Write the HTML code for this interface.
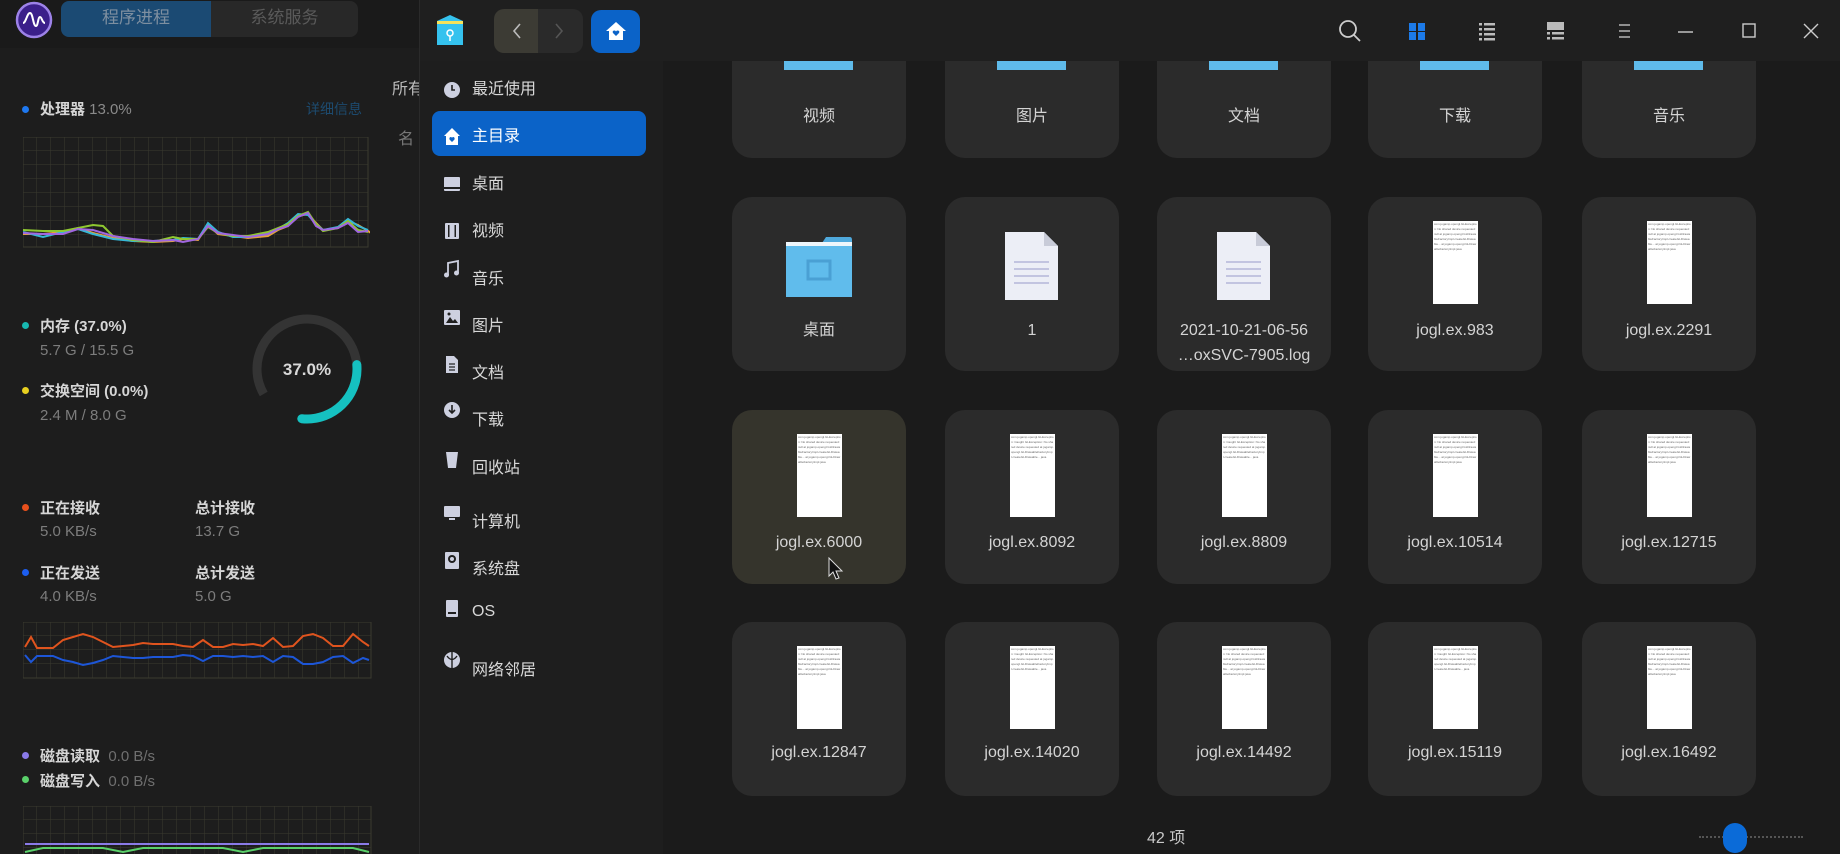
<!DOCTYPE html>
<html><head><meta charset="utf-8"><style>
*{margin:0;padding:0;box-sizing:border-box}
body{width:1840px;height:854px;overflow:hidden;background:#1c1c1c;font-family:"Liberation Sans","Noto Sans CJK SC",sans-serif;position:relative;color:#d0d0d0}
.a{position:absolute}
.lbl{font-size:15px;color:#d6d6d6;font-weight:bold}
.sub{font-size:15px;color:#7d7d7d}
.dot{width:7px;height:7px;border-radius:50%}
.side{font-size:16px;color:#d8d8d8}
.tile{position:absolute;width:174px;height:174px;border-radius:20px;background:#2b2b2b}
.tl{position:absolute;left:0;width:174px;text-align:center;font-size:16px;color:#d4d4d4;line-height:25px}
.thumb{position:absolute;left:65px;top:24px;width:45px;height:83px;background:#fff;overflow:hidden;font-size:3px;line-height:5px;color:#666;padding:1px;word-break:break-all}
.fold{position:absolute;left:52px;width:69px;height:60px}
</style></head><body>

<div class="a" style="left:0;top:0;width:420px;height:854px;background:#1d1d1d"></div>
<div class="a" style="left:0;top:0;width:420px;height:48px;background:#1a1a1a"></div>
<svg class="a" style="left:15px;top:1px" width="38" height="38"><circle cx="19" cy="19" r="17" fill="#3b1f8a" stroke="#9d82e8" stroke-width="2.5"/><path d="M8 22 C11 22 12 12 15 12 C18 12 18 25 21 25 C23 25 23 16 25 16 C27 16 27 22 30 22" stroke="#fff" stroke-width="2" fill="none"/></svg>
<div class="a" style="left:61px;top:1px;width:150px;height:36px;background:#1b4a73;border-radius:8px 0 0 8px;color:#7e8fa0;font-size:17px;text-align:center;line-height:34px">程序进程</div>
<div class="a" style="left:211px;top:1px;width:147px;height:36px;background:#282828;border-radius:0 8px 8px 0;color:#5a5a5a;font-size:17px;text-align:center;line-height:34px">系统服务</div>
<div class="a" style="left:392px;top:75px;font-size:16px;color:#bbb">所有</div>
<div class="a" style="left:398px;top:125px;font-size:16px;color:#777">名</div>

<div class="a dot" style="left:22px;top:106px;background:#1e78f0"></div>
<div class="a lbl" style="left:40px;top:98px">处理器 <span style="color:#8a8a8a;font-weight:normal">13.0%</span></div>
<div class="a" style="left:306px;top:99px;font-size:14px;color:#1d4a6e">详细信息</div>
<svg class="a" style="left:23px;top:137px" width="347" height="112">
<defs><pattern id="g" width="14" height="14" patternUnits="userSpaceOnUse"><path d="M14 0V14M0 14H14" stroke="#3a3a30" stroke-width="1" fill="none"/></pattern></defs>
<rect x="0" y="0" width="345" height="110" fill="url(#g)" stroke="#3a3a30"/>
<polyline fill="none" stroke="#e8a23c" stroke-width="2" points="0,97 20,97 40,95 55,91 70,96 90,101 110,104 130,105 150,104 160,102 175,103 185,88 195,97 210,99 225,101 245,99 255,93 265,89 275,79 285,77 293,86 300,93 315,91 325,84 335,88 345,94 348,96"/>
<polyline fill="none" stroke="#36b7d6" stroke-width="2" points="0,95 20,100 40,95 55,92 70,97 90,102 110,104 130,104 150,103 160,101 175,102 185,86 195,95 210,100 225,100 245,97 255,92 265,86 275,77 285,78 293,87 300,93 315,90 325,82 335,89 345,93"/>
<polyline fill="none" stroke="#8fc830" stroke-width="2" points="0,93 20,94 40,94 55,91 70,88 80,89 90,99 110,103 130,105 150,100 160,102 175,102 185,90 195,96 210,99 225,99 245,95 255,91 265,87 275,79 285,75 293,87 300,94 315,91 325,84 335,93 345,95"/>
<polyline fill="none" stroke="#a066e0" stroke-width="2" points="0,96 20,97 40,97 55,92 70,93 90,99 110,102 130,104 150,103 160,105 175,102 185,89 195,96 210,98 225,100 245,97 255,92 265,89 275,80 285,76 293,89 300,93 315,91 325,86 335,95 345,94"/>
</svg>

<div class="a dot" style="left:22px;top:322px;background:#17b8b0"></div>
<div class="a lbl" style="left:40px;top:315px">内存 (37.0%)</div>
<div class="a sub" style="left:40px;top:342px">5.7 G / 15.5 G</div>
<div class="a dot" style="left:22px;top:387px;background:#e8d020"></div>
<div class="a lbl" style="left:40px;top:380px">交换空间 (0.0%)</div>
<div class="a sub" style="left:40px;top:407px">2.4 M / 8.0 G</div>
<svg class="a" style="left:248px;top:310px" width="118" height="118">
<circle cx="59" cy="59" r="50" fill="none" stroke="#343434" stroke-width="9" stroke-dasharray="262 52" transform="rotate(150 59 59)"/>
<circle cx="59" cy="59" r="50" fill="none" stroke="#15c1c1" stroke-width="9" stroke-linecap="round" stroke-dasharray="88 226" transform="rotate(-5 59 59)"/>
<text x="59" y="65" text-anchor="middle" font-family="Liberation Sans" font-weight="bold" font-size="17" fill="#d8d8d8">37.0%</text>
</svg>

<div class="a dot" style="left:22px;top:504px;background:#e8501c"></div>
<div class="a lbl" style="left:40px;top:497px">正在接收</div>
<div class="a sub" style="left:40px;top:523px">5.0 KB/s</div>
<div class="a lbl" style="left:195px;top:497px">总计接收</div>
<div class="a sub" style="left:195px;top:523px">13.7 G</div>
<div class="a dot" style="left:22px;top:569px;background:#1c5ef0"></div>
<div class="a lbl" style="left:40px;top:562px">正在发送</div>
<div class="a sub" style="left:40px;top:588px">4.0 KB/s</div>
<div class="a lbl" style="left:195px;top:562px">总计发送</div>
<div class="a sub" style="left:195px;top:588px">5.0 G</div>
<svg class="a" style="left:23px;top:622px" width="350" height="60">
<rect x="0" y="0" width="348" height="56" fill="url(#g)" stroke="#3a3a30"/>
<polyline fill="none" stroke="#e0541e" stroke-width="2" points="2,25 8,15 14,26 30,26 40,18 50,15 60,12 70,15 80,20 90,25 100,24 110,23 120,21 130,22 140,22 150,22 160,24 170,25 180,18 190,25 200,25 210,22 220,23 230,22 240,24 250,16 260,25 270,24 280,14 290,12 300,16 310,24 320,24 330,12 340,20 346,24"/>
<polyline fill="none" stroke="#1d56d8" stroke-width="2" points="2,33 8,40 14,34 30,34 40,38 50,40 60,43 70,41 80,38 90,34 100,35 110,36 120,36 130,35 140,35 150,35 160,33 170,34 180,39 190,34 200,34 210,35 220,34 230,35 240,34 250,40 260,34 270,35 280,42 290,42 300,40 310,35 320,34 330,41 340,36 346,38"/>
</svg>

<div class="a dot" style="left:22px;top:752px;background:#8a7ae8"></div>
<div class="a lbl" style="left:40px;top:745px">磁盘读取 <span style="color:#6f6f6f;font-weight:normal">&nbsp;0.0 B/s</span></div>
<div class="a dot" style="left:22px;top:776px;background:#5ad06a"></div>
<div class="a lbl" style="left:40px;top:770px">磁盘写入 <span style="color:#6f6f6f;font-weight:normal">&nbsp;0.0 B/s</span></div>
<svg class="a" style="left:23px;top:806px" width="350" height="48">
<rect x="0" y="0" width="348" height="60" fill="url(#g)" stroke="#3a3a30"/>
<line x1="2" y1="38" x2="346" y2="38" stroke="#8a7ae8" stroke-width="2"/>
<polyline fill="none" stroke="#5ad06a" stroke-width="2" points="2,46 20,42 80,42 100,46 120,42 200,42 220,46 240,42 330,42 346,46"/>
</svg>

<div class="a" style="left:419px;top:0;width:1421px;height:854px;background:#1e1e1e;border-left:1px solid #2a2a2a"></div>
<div class="a" style="left:663px;top:61px;width:1177px;height:793px;background:#1b1b1b;overflow:hidden">

<div class="tile" style="left:69px;top:-77px"><div class="fold" style="top:22px;background:#5fbbeb;height:64px"></div><div class="tl" style="top:120px">视频</div></div>
<div class="tile" style="left:282px;top:-77px"><div class="fold" style="top:22px;background:#5fbbeb;height:64px"></div><div class="tl" style="top:120px">图片</div></div>
<div class="tile" style="left:494px;top:-77px"><div class="fold" style="top:22px;background:#5fbbeb;height:64px"></div><div class="tl" style="top:120px">文档</div></div>
<div class="tile" style="left:705px;top:-77px"><div class="fold" style="top:22px;background:#5fbbeb;height:64px"></div><div class="tl" style="top:120px">下载</div></div>
<div class="tile" style="left:919px;top:-77px"><div class="fold" style="top:22px;background:#5fbbeb;height:64px"></div><div class="tl" style="top:120px">音乐</div></div>

<div class="tile" style="left:69px;top:136px">
<svg class="a" style="left:52px;top:36px" width="70" height="66"><path d="M2 10 H38 L42 4 H66 Q68 4 68 7 V64 H2 Z" fill="#4fa9dc"/><rect x="2" y="9" width="66" height="4" fill="#eef6fb"/><rect x="2" y="13" width="66" height="51" fill="#60bcec"/><rect x="24" y="28" width="22" height="18" fill="none" stroke="#4aa0d4" stroke-width="3"/></svg>
<div class="tl" style="top:121px">桌面</div></div>
<div class="tile" style="left:282px;top:136px">
<svg class="a" style="left:59px;top:34px" width="56" height="70"><path d="M1 1 H40 L54 15 V69 H1 Z" fill="#eceef6"/><path d="M40 1 V15 H54" fill="#c8cbd8"/><g stroke="#b4b6d8" stroke-width="1.5"><line x1="10" y1="31" x2="45" y2="31"/><line x1="10" y1="38" x2="45" y2="38"/><line x1="10" y1="45" x2="45" y2="45"/><line x1="10" y1="52" x2="45" y2="52"/></g></svg>
<div class="tl" style="top:121px">1</div></div>
<div class="tile" style="left:494px;top:136px">
<svg class="a" style="left:59px;top:34px" width="56" height="70"><path d="M1 1 H40 L54 15 V69 H1 Z" fill="#eceef6"/><path d="M40 1 V15 H54" fill="#c8cbd8"/><g stroke="#b4b6d8" stroke-width="1.5"><line x1="10" y1="31" x2="45" y2="31"/><line x1="10" y1="38" x2="45" y2="38"/><line x1="10" y1="45" x2="45" y2="45"/><line x1="10" y1="52" x2="45" y2="52"/></g></svg>
<div class="tl" style="top:121px">2021-10-21-06-56<br>…oxSVC-7905.log</div></div>
<div class="tile" style="left:705px;top:136px"><div class="thumb">com.jogamp.opengl.GLException: No shared device requested: null at jogamp.opengl.GLDrawableFactoryImpl.createGLDrawable... at jogamp.opengl.GLDrawableFactoryImpl.java</div><div class="tl" style="top:121px">jogl.ex.983</div></div>
<div class="tile" style="left:919px;top:136px"><div class="thumb">com.jogamp.opengl.GLException: No shared device requested: null at jogamp.opengl.GLDrawableFactoryImpl.createGLDrawable... at jogamp.opengl.GLDrawableFactoryImpl.java</div><div class="tl" style="top:121px">jogl.ex.2291</div></div>

<div class="tile" style="left:69px;top:349px;background:#35342c"><div class="thumb">com.jogamp.opengl.GLException: No shared device requested: null at jogamp.opengl.GLDrawableFactoryImpl.createGLDrawable... at jogamp.opengl.GLDrawableFactoryImpl.java</div><div class="tl" style="top:120px">jogl.ex.6000</div></div>
<div class="tile" style="left:282px;top:349px"><div class="thumb">com.jogamp.opengl.GLException: Caught GLException: No shared device requested at jogamp.opengl.GLDrawableFactoryImpl.createGLDrawable... java</div><div class="tl" style="top:120px">jogl.ex.8092</div></div>
<div class="tile" style="left:494px;top:349px"><div class="thumb">com.jogamp.opengl.GLException: Caught GLException: No shared device requested at jogamp.opengl.GLDrawableFactoryImpl.createGLDrawable... java</div><div class="tl" style="top:120px">jogl.ex.8809</div></div>
<div class="tile" style="left:705px;top:349px"><div class="thumb">com.jogamp.opengl.GLException: No shared device requested: null at jogamp.opengl.GLDrawableFactoryImpl.createGLDrawable... at jogamp.opengl.GLDrawableFactoryImpl.java</div><div class="tl" style="top:120px">jogl.ex.10514</div></div>
<div class="tile" style="left:919px;top:349px"><div class="thumb">com.jogamp.opengl.GLException: No shared device requested: null at jogamp.opengl.GLDrawableFactoryImpl.createGLDrawable... at jogamp.opengl.GLDrawableFactoryImpl.java</div><div class="tl" style="top:120px">jogl.ex.12715</div></div>

<div class="tile" style="left:69px;top:561px"><div class="thumb">com.jogamp.opengl.GLException: No shared device requested: null at jogamp.opengl.GLDrawableFactoryImpl.createGLDrawable... at jogamp.opengl.GLDrawableFactoryImpl.java</div><div class="tl" style="top:118px">jogl.ex.12847</div></div>
<div class="tile" style="left:282px;top:561px"><div class="thumb">com.jogamp.opengl.GLException: Caught GLException: No shared device requested at jogamp.opengl.GLDrawableFactoryImpl.createGLDrawable... java</div><div class="tl" style="top:118px">jogl.ex.14020</div></div>
<div class="tile" style="left:494px;top:561px"><div class="thumb">com.jogamp.opengl.GLException: No shared device requested: null at jogamp.opengl.GLDrawableFactoryImpl.createGLDrawable... at jogamp.opengl.GLDrawableFactoryImpl.java</div><div class="tl" style="top:118px">jogl.ex.14492</div></div>
<div class="tile" style="left:705px;top:561px"><div class="thumb">com.jogamp.opengl.GLException: Caught GLException: No shared device requested at jogamp.opengl.GLDrawableFactoryImpl.createGLDrawable... java</div><div class="tl" style="top:118px">jogl.ex.15119</div></div>
<div class="tile" style="left:919px;top:561px"><div class="thumb">com.jogamp.opengl.GLException: No shared device requested: null at jogamp.opengl.GLDrawableFactoryImpl.createGLDrawable... at jogamp.opengl.GLDrawableFactoryImpl.java</div><div class="tl" style="top:118px">jogl.ex.16492</div></div>

<div class="a" style="left:484px;top:763px;font-size:16px;color:#c8c8c8">42 项</div>
<div class="a" style="left:1036px;top:775px;width:104px;border-top:2px dotted #555"></div>
<div class="a" style="left:1060px;top:762px;width:24px;height:30px;border-radius:12px;background:#0b6bd8"></div>
</div>

<svg class="a" style="left:828px;top:557px" width="16" height="24"><path d="M1 1 L1 19 L5 15 L8 22 L11 21 L8 14 L14 14 Z" fill="#111" stroke="#ddd" stroke-width="1"/></svg>

<div class="a" style="left:420px;top:0;width:1420px;height:61px;background:#1f1f1f"></div>
<svg class="a" style="left:435px;top:13px" width="30" height="34"><path d="M2 8 L15 2 L28 8 V32 H2 Z" fill="#35c2ee"/><rect x="2" y="8" width="26" height="3" fill="#f6e25a"/><circle cx="15" cy="20" r="3" fill="none" stroke="#fff" stroke-width="1.5"/><line x1="15" y1="23" x2="15" y2="28" stroke="#fff" stroke-width="1.5"/></svg>
<div class="a" style="left:494px;top:9px;width:44px;height:44px;background:#3c3b34;border-radius:10px 0 0 10px"></div>
<div class="a" style="left:538px;top:9px;width:45px;height:44px;background:#2a2a2a;border-radius:0 10px 10px 0"></div>
<svg class="a" style="left:494px;top:9px" width="90" height="44"><path d="M26 15 L20 22 L26 29" stroke="#bbb" stroke-width="1.6" fill="none"/><path d="M62 15 L68 22 L62 29" stroke="#555" stroke-width="1.6" fill="none"/></svg>
<div class="a" style="left:591px;top:10px;width:49px;height:43px;background:#0b63c8;border-radius:10px"></div>
<svg class="a" style="left:604px;top:20px" width="24" height="22"><path d="M12 2 L22 11 H19 V20 H5 V11 H2 Z" fill="#fff"/><path d="M12 16 L9 13 Q8 11 10 10.5 Q11.5 10.3 12 11.5 Q12.5 10.3 14 10.5 Q16 11 15 13 Z" fill="#0b63c8"/></svg>

<svg class="a" style="left:1335px;top:16px" width="30" height="30"><circle cx="13" cy="13" r="8" fill="none" stroke="#ccc" stroke-width="1.8"/><line x1="19" y1="19" x2="25" y2="25" stroke="#ccc" stroke-width="1.8"/></svg>
<svg class="a" style="left:1407px;top:21px" width="22" height="22"><rect x="2" y="2" width="7" height="8" fill="#1c7ae8"/><rect x="11" y="2" width="7" height="8" fill="#1c7ae8"/><rect x="2" y="11" width="7" height="8" fill="#1c7ae8"/><rect x="11" y="11" width="7" height="8" fill="#1c7ae8"/></svg>
<svg class="a" style="left:1477px;top:21px" width="22" height="22"><g fill="#bbb"><rect x="2" y="2" width="3" height="2.5"/><rect x="7" y="2" width="11" height="2.5"/><rect x="2" y="7" width="3" height="2.5"/><rect x="7" y="7" width="11" height="2.5"/><rect x="2" y="12" width="3" height="2.5"/><rect x="7" y="12" width="11" height="2.5"/><rect x="2" y="17" width="3" height="2.5"/><rect x="7" y="17" width="11" height="2.5"/></g></svg>
<svg class="a" style="left:1545px;top:20px" width="22" height="22"><g fill="#bbb"><rect x="2" y="2" width="17" height="8"/><rect x="2" y="12" width="3" height="2.5"/><rect x="7" y="12" width="12" height="2.5"/><rect x="2" y="17" width="3" height="2.5"/><rect x="7" y="17" width="12" height="2.5"/></g></svg>
<svg class="a" style="left:1615px;top:21px" width="20" height="20"><g stroke="#ccc" stroke-width="1.3"><line x1="4" y1="4" x2="15" y2="4"/><line x1="4" y1="10" x2="15" y2="10"/><line x1="4" y1="16" x2="15" y2="16"/></g></svg>
<svg class="a" style="left:1676px;top:21px" width="20" height="20"><line x1="2" y1="11" x2="17" y2="11" stroke="#ccc" stroke-width="1.4"/></svg>
<svg class="a" style="left:1740px;top:21px" width="20" height="20"><rect x="3" y="3" width="12" height="13" fill="none" stroke="#ccc" stroke-width="1.4"/></svg>
<svg class="a" style="left:1801px;top:21px" width="20" height="20"><path d="M3 3 L17 17 M17 3 L3 17" stroke="#ccc" stroke-width="1.4"/></svg>

<div class="a" style="left:432px;top:111px;width:214px;height:45px;background:#0b63c8;border-radius:8px"></div>
<div class="a side" style="left:472px;top:75px">最近使用</div>
<div class="a side" style="left:472px;top:122px;color:#fff">主目录</div>
<div class="a side" style="left:472px;top:170px">桌面</div>
<div class="a side" style="left:472px;top:217px">视频</div>
<div class="a side" style="left:472px;top:265px">音乐</div>
<div class="a side" style="left:472px;top:312px">图片</div>
<div class="a side" style="left:472px;top:359px">文档</div>
<div class="a side" style="left:472px;top:406px">下载</div>
<div class="a side" style="left:472px;top:454px">回收站</div>
<div class="a side" style="left:472px;top:508px">计算机</div>
<div class="a side" style="left:472px;top:555px">系统盘</div>
<div class="a side" style="left:472px;top:603px">OS</div>
<div class="a side" style="left:472px;top:656px">网络邻居</div>
<svg class="a" style="left:441px;top:79px" width="22" height="620">
<g fill="#cdd0e0">
<circle cx="11" cy="11" r="8"/><path d="M11 6 V11 H14" stroke="#1f1f1f" stroke-width="1.6" fill="none"/>
<path d="M11 49 L19 57 H17 V66 H5 V57 H3 Z" fill="#fff"/><path d="M11 63 L8.5 60.5 Q8 58.5 9.5 58 Q11 58 11 59 Q11 58 12.5 58 Q14 58.5 13.5 60.5 Z" fill="#0b63c8"/>
<rect x="3" y="98" width="16" height="14" rx="1"/><rect x="3" y="108" width="16" height="2" fill="#1f1f1f"/>
<rect x="4" y="144" width="14" height="16" rx="1"/><g fill="#1f1f1f"><rect x="7" y="146" width="1.5" height="12"/><rect x="13.5" y="146" width="1.5" height="12"/></g>
<path d="M7 196 V184 L17 182 V194" stroke="#cdd0e0" stroke-width="1.8" fill="none"/><circle cx="5.5" cy="196" r="2.5"/><circle cx="15.5" cy="194" r="2.5"/>
<rect x="3" y="231" width="16" height="15" rx="1"/><path d="M5 244 L9 238 L12 242 L14 240 L17 244 Z" fill="#1f1f1f"/><circle cx="8" cy="235" r="1.5" fill="#1f1f1f"/>
<path d="M5 277 H13 L17 281 V294 H5 Z"/><g stroke="#1f1f1f" stroke-width="1.2"><line x1="8" y1="285" x2="14" y2="285"/><line x1="8" y1="288" x2="14" y2="288"/><line x1="8" y1="291" x2="14" y2="291"/></g>
<circle cx="11" cy="331" r="8"/><path d="M11 326 V334 M8 331 L11 334 L14 331" stroke="#1f1f1f" stroke-width="1.6" fill="none"/>
<path d="M5 373 H17 L15 389 H7 Z"/>
<rect x="3" y="427" width="16" height="11" rx="1"/><rect x="8" y="439" width="6" height="2"/>
<rect x="4" y="473" width="14" height="17" rx="1"/><circle cx="11" cy="480" r="4" fill="#1f1f1f"/><circle cx="11" cy="480" r="2"/>
<rect x="5" y="521" width="12" height="17" rx="1"/><rect x="7" y="533" width="8" height="2" fill="#1f1f1f"/>
<circle cx="11" cy="581" r="8"/><path d="M6 577 Q11 584 16 577 M11 573 V589" stroke="#1f1f1f" stroke-width="1.4" fill="none"/>
</g></svg>
</body></html>
